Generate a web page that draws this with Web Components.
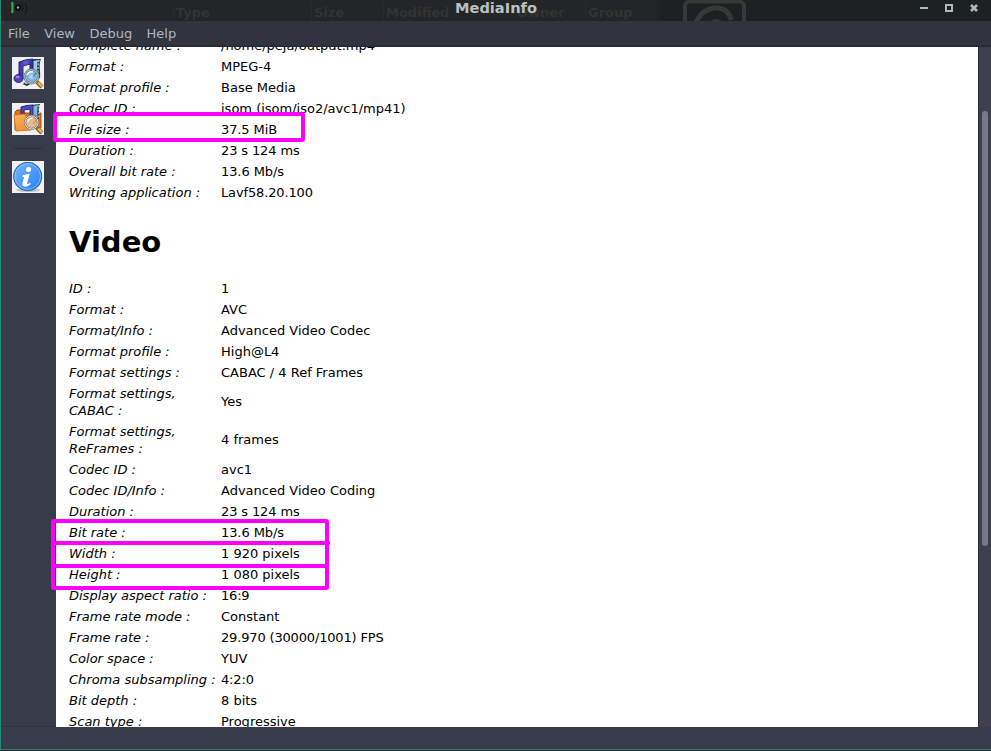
<!DOCTYPE html>
<html lang="en"><head><meta charset="utf-8"><title>MediaInfo</title>
<style>html,body{margin:0;height:100%;overflow:hidden;background:#383b49}body{font-family:"DejaVu Sans",sans-serif;font-size:13px}</style></head>
<body><media-window></media-window>
<script>
const define = (name, html) => customElements.define(name, class extends HTMLElement {
  constructor(){ super(); const t=document.createElement('template'); t.innerHTML=html; this.attachShadow({mode:'open'}).append(t.content.cloneNode(true)); }
});

define('title-bar', `<style>
:host{display:block;position:relative;height:21px;overflow:hidden;background:linear-gradient(90deg,#232526 0 655px,#1d2122 662px)}
.ghost{position:absolute;top:5px;font-weight:bold;font-size:13px;line-height:16px;color:#323334}
.ghost::before{content:"";position:absolute;left:-3px;top:-2px;height:18px;width:1px;background:#292b2c}
h1{position:absolute;left:455px;top:-1px;margin:0;font-size:14.6px;line-height:18px;color:#b9c0c2;white-space:nowrap}
svg{position:absolute;left:0;top:0}
</style>
<span class="ghost" style="left:176px">Type</span><span class="ghost" style="left:314px">Size</span><span class="ghost" style="left:386px">Modified</span><span class="ghost" style="left:517px">Owner</span><span class="ghost" style="left:588px">Group</span>
<h1>MediaInfo</h1>
<svg width="991" height="21" fill="none">
<path d="M11.5 2v11" stroke="#a8443c"/><path d="M12.5 2v11" stroke="#35a84c" stroke-width="1.2"/><path d="M13.6 3v10" stroke="#3d4bb0"/>
<circle cx="18" cy="7.5" r="3" fill="#090a0a"/><circle cx="18" cy="7.5" r="1.2" fill="#a0a5a3"/><path d="M22 4q2.5 3.5 0 7M25 3q3.5 5 0 11" stroke="#121414"/>
<rect x="685" y="1.5" width="59" height="40" rx="5" stroke="#373938" stroke-width="4"/>
<path d="M696 22Q703 8 716 8t15 12" stroke="#373938" stroke-width="5"/><path d="M711 22q5-4 10 0" stroke="#343637" stroke-width="2"/>
<path d="M920 8h8" stroke="#acbabc" stroke-width="2"/><rect x="946" y="5" width="6" height="6" stroke="#acbabc" stroke-width="2"/>
<path d="M971 5l6 6M977 5l-6 6" stroke="#acbabc" stroke-width="2.6"/>
</svg>`);

define('menu-bar', `<style>:host{display:flex;box-sizing:border-box;height:26px;padding:4px 0 0 8px;gap:14.4px;background:#31343f;border-bottom:1px solid #252835;box-shadow:inset 0 -1px #2b2e3a;color:#aeb6c2;line-height:17px}</style><slot></slot>`);

define('tool-bar', `<style>
:host{display:flex;flex-direction:column;align-items:center;box-sizing:border-box;width:56px;padding-top:10px;background:#383b49;border-bottom:1px solid #30333e}
svg{display:block;flex:none;width:32px;height:32px;background:#f0f0f0}
svg+svg{margin-top:14px} hr{width:28px;height:1px;border:0;background:#2c2f39;margin:13px 0 12px}
</style>
<svg viewBox="0 0 32 32"><defs>
<linearGradient id="n" x2="1"><stop stop-color="#372eaa"/><stop offset=".5" stop-color="#6860da"/><stop offset="1" stop-color="#2c248b"/></linearGradient>
<radialGradient id="g"><stop stop-color="#c4e4f5"/><stop offset=".6" stop-color="#73aed6"/><stop offset="1" stop-color="#a9d1e7"/></radialGradient></defs>
<path d="M19 2l10 0c-3 7 0 12-1 19l-13 8-5-2c8-4 12-13 10-25z" fill="#263945"/><path d="M21 4l5-1c-2 8 0 12-1 17l-10 7-3-1c8-5 10-12 9-22z" fill="#94cfe9"/><path d="M20 2q2 10-1 17T10 27" fill="none" stroke="#e2f0f4" stroke-dasharray="2 1.5"/><path d="M27 3q-2 9 0 17" fill="none" stroke="#edf6fa" stroke-dasharray="2 1.5"/>
<path d="M7 21V5q7-3 14-3v15h-3V7L11 9v13z" fill="url(#n)" stroke="#2d2574"/><ellipse cx="6.5" cy="21.5" rx="4.5" ry="4" fill="#5044bd" stroke="#292174"/><ellipse cx="5.5" cy="20" rx="2" ry="1.2" fill="#938de9"/>
<circle cx="19.5" cy="19.5" r="6.8" fill="url(#g)" stroke="#596974" stroke-width="2.2"/><circle cx="19.5" cy="19.5" r="6.8" fill="none" stroke="#d4dde1" stroke-width=".9"/><path d="M15 18q2-4 6-3" stroke="#edfaff" stroke-width="1.5" fill="none"/><path d="M21 20l3-4" stroke="#39749d"/>
<path d="M25 25l5 5" stroke="#8a591b" stroke-width="4"/><path d="M26 25.5l4 4" stroke="#efb44b" stroke-width="2.4"/></svg>
<svg viewBox="0 0 32 32"><defs><linearGradient id="f" y2="1"><stop stop-color="#ffb45f"/><stop offset="1" stop-color="#ee8420"/></linearGradient></defs>
<path d="M3 27V9l2-2h6l2 3h16v15z" fill="#dd7412" stroke="#a95412"/>
<path d="M19 2l9-1c-2 5 0 10-1 15h-8z" fill="#263945"/><path d="M21 3l5-1c-1 6-1 9 0 13h-5z" fill="#78bcda"/><path d="M21 3v12M27 2v13" stroke="#e5f2f7" stroke-dasharray="2 1.5"/>
<path d="M9 13V4q6-2 12-2v12h-3V6l-6 1v7z" fill="#5449bd" stroke="#2d2574"/>
<path d="M2 12l10-1 2 2 10-1-1 12-4 3-15 1z" fill="url(#f)" stroke="#c9691a" stroke-width=".8"/>
<circle cx="19.5" cy="19.5" r="6.5" fill="#e8b98c" stroke="#707373" stroke-width="2.2"/><circle cx="19.5" cy="19.5" r="6.5" fill="none" stroke="#e1e1dc" stroke-width="1"/><path d="M15.5 19q1-4 5-4" stroke="#fff0df" stroke-width="1.4" fill="none"/><path d="M21 21l4-5" stroke="#c78350"/>
<path d="M25 25l5 5" stroke="#8a591b" stroke-width="4"/><path d="M26 25.5l4 4" stroke="#efb44b" stroke-width="2.4"/></svg>
<hr>
<svg viewBox="0 0 32 32"><defs><linearGradient id="i" y2="1"><stop stop-color="#75b7f8"/><stop offset=".45" stop-color="#519ff5"/><stop offset="1" stop-color="#2481ee"/></linearGradient></defs>
<ellipse cx="16" cy="29" rx="12" ry="2" fill="#c5c5c5"/><circle cx="15.7" cy="15.5" r="14" fill="url(#i)" stroke="#2764b5" stroke-width="1.1"/><circle cx="15.7" cy="15.5" r="12.8" fill="none" stroke="#8ac5ff" stroke-width=".8"/>
<circle cx="16.5" cy="8.5" r="2.5" fill="#fff"/><path d="M10.8 14.2l7-1.7-2.5 9.2q-.5 2 1 1.3l2-1.3.5 1.2q-3 3-6 2.7-3.2-.4-2.4-3.4l1.7-6.3-1.7-.2z" fill="#fff"/></svg>`);

define('info-row', `<style>:host{display:grid;grid-template-columns:148px 1fr;column-gap:4px;align-items:center;padding:2px 0;line-height:17px;color:#000}.k{font-style:italic;white-space:pre}.v{white-space:nowrap;letter-spacing:var(--value-spacing,0)}:host([wrapped]) .v{padding-bottom:2px}</style><span class="k"><slot name="key"></slot></span><span class="v"><slot></slot></span>`);

define('section-title', `<style>:host{display:block;box-sizing:border-box;height:75px;padding-top:21px;font-size:29px;line-height:36px;font-weight:bold;color:#000}</style><slot></slot>`);

define('mark-box', `<style>:host{position:absolute;box-sizing:border-box;border:4px solid #f0f;border-radius:3px}</style>`);

define('scroll-bar', `<style>:host{display:block;box-sizing:border-box;width:13px;border-left:1px solid #292c38;background:#3e414d;padding:64px 3px 0 3px}i{display:block;width:6px;height:435px;border-radius:3px;background:#767a86}</style><i></i>`);

define('media-window', `<style>
:host{display:flex;flex-direction:column;position:relative;width:991px;height:751px;overflow:hidden;background:#383b49}
main{display:flex;height:680px;flex:none}
article{flex:1;box-sizing:border-box;background:#fff;overflow:hidden;padding-left:13px}
.doc{margin-top:-12px}
footer{flex:1;box-sizing:border-box;border-bottom:1px solid #22262b;box-shadow:inset 0 -1px #27826f}
.edge{position:absolute;left:0;top:0;width:1px;height:750px;background:#218b70}
</style>
<title-bar></title-bar>
<menu-bar><span>File</span><span>View</span><span>Debug</span><span>Help</span></menu-bar>
<main><tool-bar></tool-bar><article><div class="doc"></div></article><scroll-bar></scroll-bar></main>
<footer></footer><div class="edge"></div>
<mark-box style="left:53px;top:112px;width:252px;height:30px"></mark-box>
<mark-box style="left:51px;top:519px;width:278px;height:71px"></mark-box>
<mark-box style="left:51px;top:541px;width:279px;height:4px;border-width:2px;border-radius:1px"></mark-box>
<mark-box style="left:51px;top:564px;width:278px;height:4px;border-width:2px;border-radius:0"></mark-box>`);

const rows = [
 ['Complete name :','/home/peja/output.mp4'],['Format :','MPEG-4'],['Format profile :','Base Media'],['Codec ID :','isom (isom/iso2/avc1/mp41)'],['File size :','37.5 MiB'],['Duration :','23 s 124 ms'],['Overall bit rate :','13.6 Mb/s'],['Writing application :','Lavf58.20.100'],
 ['Video'],
 ['ID :','1'],['Format :','AVC'],['Format/Info :','Advanced Video Codec'],['Format profile :','High@L4'],['Format settings :','CABAC / 4 Ref Frames'],['Format settings,\nCABAC :','Yes'],['Format settings,\nReFrames :','4 frames'],['Codec ID :','avc1'],['Codec ID/Info :','Advanced Video Coding'],['Duration :','23 s 124 ms'],['Bit rate :','13.6 Mb/s'],['Width :','1 920 pixels'],['Height :','1 080 pixels'],['Display aspect ratio :','16:9'],['Frame rate mode :','Constant'],['Frame rate :','29.970 (30000/1001) FPS'],['Color space :','YUV'],['Chroma subsampling :','4:2:0'],['Bit depth :','8 bits'],['Scan type :','Progressive']];
const doc = document.querySelector('media-window').shadowRoot.querySelector('.doc');
for (const [key, value] of rows) {
  const el = document.createElement(value ? 'info-row' : 'section-title');
  if (value) {
    const k = document.createElement('span'); k.slot='key'; k.textContent=key; el.append(k, value);
    if (key.includes('\n')) el.setAttribute('wrapped','');
    // Values made mostly of digits are set slightly tighter.
    const digits = value.replace(/\D/g,'').length;
    if (digits > 2 && !value.includes('pixels') && !value.includes('isom') && digits >= value.length / 3) el.style.setProperty('--value-spacing', (-.27*digits/value.length).toFixed(3)+'px');
  } else el.textContent = key;
  doc.append(el);
}
</script></body></html>
